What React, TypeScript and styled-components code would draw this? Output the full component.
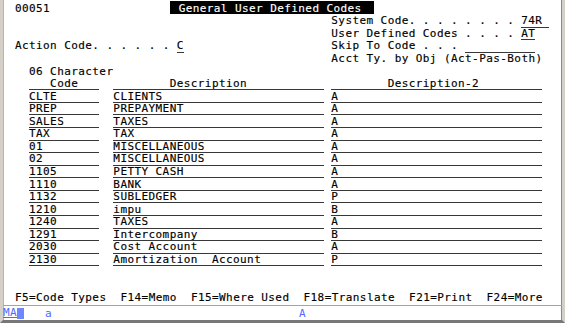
import styled, { createGlobalStyle } from "styled-components";

const CELL = 7.04;
const ROW = 88 / 7;

const GlobalStyle = createGlobalStyle`
  html, body {
    margin: 0;
    padding: 0;
    background: #ffffff;
  }
`;

const Frame = styled.div`
  width: 565px;
  height: 323px;
  box-sizing: border-box;
  display: flex;
  flex-direction: column;
  border-left: 3px solid #d4d0c8;
  border-right: 3px solid #d4d0c8;
  border-bottom: 3px solid #777777;
  box-shadow: inset 1px 0 #b8b4ac, inset -1px 0 #8a8a8a;
  background: #ffffff;
  font-family: "DejaVu Sans Mono", "Liberation Mono", monospace;
  font-size: 11px;
  letter-spacing: 0.417px;
  color: #000000;
  -webkit-text-stroke: 0.15px currentColor;
  overflow: hidden;
`;

const Screen = styled.div`
  height: 305px;
  box-sizing: border-box;
  padding-top: 2.7px;
  display: flex;
  flex-direction: column;
`;

const Line = styled.div`
  display: grid;
  grid-template-columns: 4.88px repeat(79, ${CELL}px);
  height: ${ROW}px;
  line-height: ${ROW}px;
  white-space: pre;
`;

const Cell = styled.span<{ $col: number; $len: number }>`
  grid-column: ${p => p.$col} / span ${p => p.$len};
`;

const Field = styled(Cell)`
  background: linear-gradient(#383838, #383838) 0 11.3px / 100% 1px no-repeat;
`;

const TitleBar = styled(Cell)`
  background: #000000;
  color: #ffffff;
  margin-top: -2px;
  height: 13px;
  padding-left: 2px;
  line-height: ${ROW + 4}px;
`;

const Status = styled.div`
  flex: 1;
  border-top: 1px solid #8da0f2;
  display: grid;
  grid-template-columns: 14px 7px 21px 254px 1fr;
  align-items: center;
  color: #4f68ff;
  -webkit-text-stroke: 0;
`;

const Mode = styled.span`
  text-decoration: underline;
  text-underline-offset: 1px;
  line-height: 12px;
`;

const Cursor = styled.span`
  height: 11px;
  background: #6f86ff;
`;

type Row = { code: string; desc: string; desc2: string };

const rows: Row[] = [
  { code: "CLTE", desc: "CLIENTS", desc2: "A" },
  { code: "PREP", desc: "PREPAYMENT", desc2: "A" },
  { code: "SALES", desc: "TAXES", desc2: "A" },
  { code: "TAX", desc: "TAX", desc2: "A" },
  { code: "01", desc: "MISCELLANEOUS", desc2: "A" },
  { code: "02", desc: "MISCELLANEOUS", desc2: "A" },
  { code: "1105", desc: "PETTY CASH", desc2: "A" },
  { code: "1110", desc: "BANK", desc2: "A" },
  { code: "1132", desc: "SUBLEDGER", desc2: "P" },
  { code: "1210", desc: "impu", desc2: "B" },
  { code: "1240", desc: "TAXES", desc2: "A" },
  { code: "1291", desc: "Intercompany", desc2: "B" },
  { code: "2030", desc: "Cost Account", desc2: "A" },
  { code: "2130", desc: "Amortization  Account", desc2: "P" },
];

const txt = (col: number, s: string) => (
  <Cell $col={col} $len={s.length}>{s}</Cell>
);

function App() {
  return (
    <>
      <GlobalStyle />
      <Frame>
        <Screen>
          <Line>
            {txt(3, "00051")}
            <TitleBar $col={25} $len={29}> General User Defined Codes  </TitleBar>
          </Line>
          <Line>
            {txt(48, "System Code. . . . . . . .")}
            <Field $col={75} $len={4}>74R</Field>
          </Line>
          <Line>
            {txt(48, "User Defined Codes . . . .")}
            <Field $col={75} $len={2}>AT</Field>
          </Line>
          <Line>
            {txt(3, "Action Code. . . . . .")}
            <Field $col={26} $len={1}>C</Field>
            {txt(48, "Skip To Code . . .")}
            <Field $col={67} $len={10}></Field>
          </Line>
          <Line>{txt(48, "Acct Ty. by Obj (Act-Pas-Both)")}</Line>
          <Line>{txt(5, "06 Character")}</Line>
          <Line>
            <Field $col={5} $len={10}>{"   Code"}</Field>
            <Field $col={17} $len={30}>{"        Description"}</Field>
            <Field $col={48} $len={30}>{"        Description-2"}</Field>
          </Line>
          {rows.map(r => (
            <Line key={r.code}>
              <Field $col={5} $len={10}>{r.code}</Field>
              <Field $col={17} $len={30}>{r.desc}</Field>
              <Field $col={48} $len={30}>{r.desc2}</Field>
            </Line>
          ))}
          <Line />
          <Line />
          <Line>
            {txt(3, "F5=Code Types  F14=Memo  F15=Where Used  F18=Translate  F21=Print  F24=More")}
          </Line>
        </Screen>
        <Status>
          <Mode>MA</Mode>
          <Cursor />
          <span />
          <span>a</span>
          <span>A</span>
        </Status>
      </Frame>
    </>
  );
}

export default App;
